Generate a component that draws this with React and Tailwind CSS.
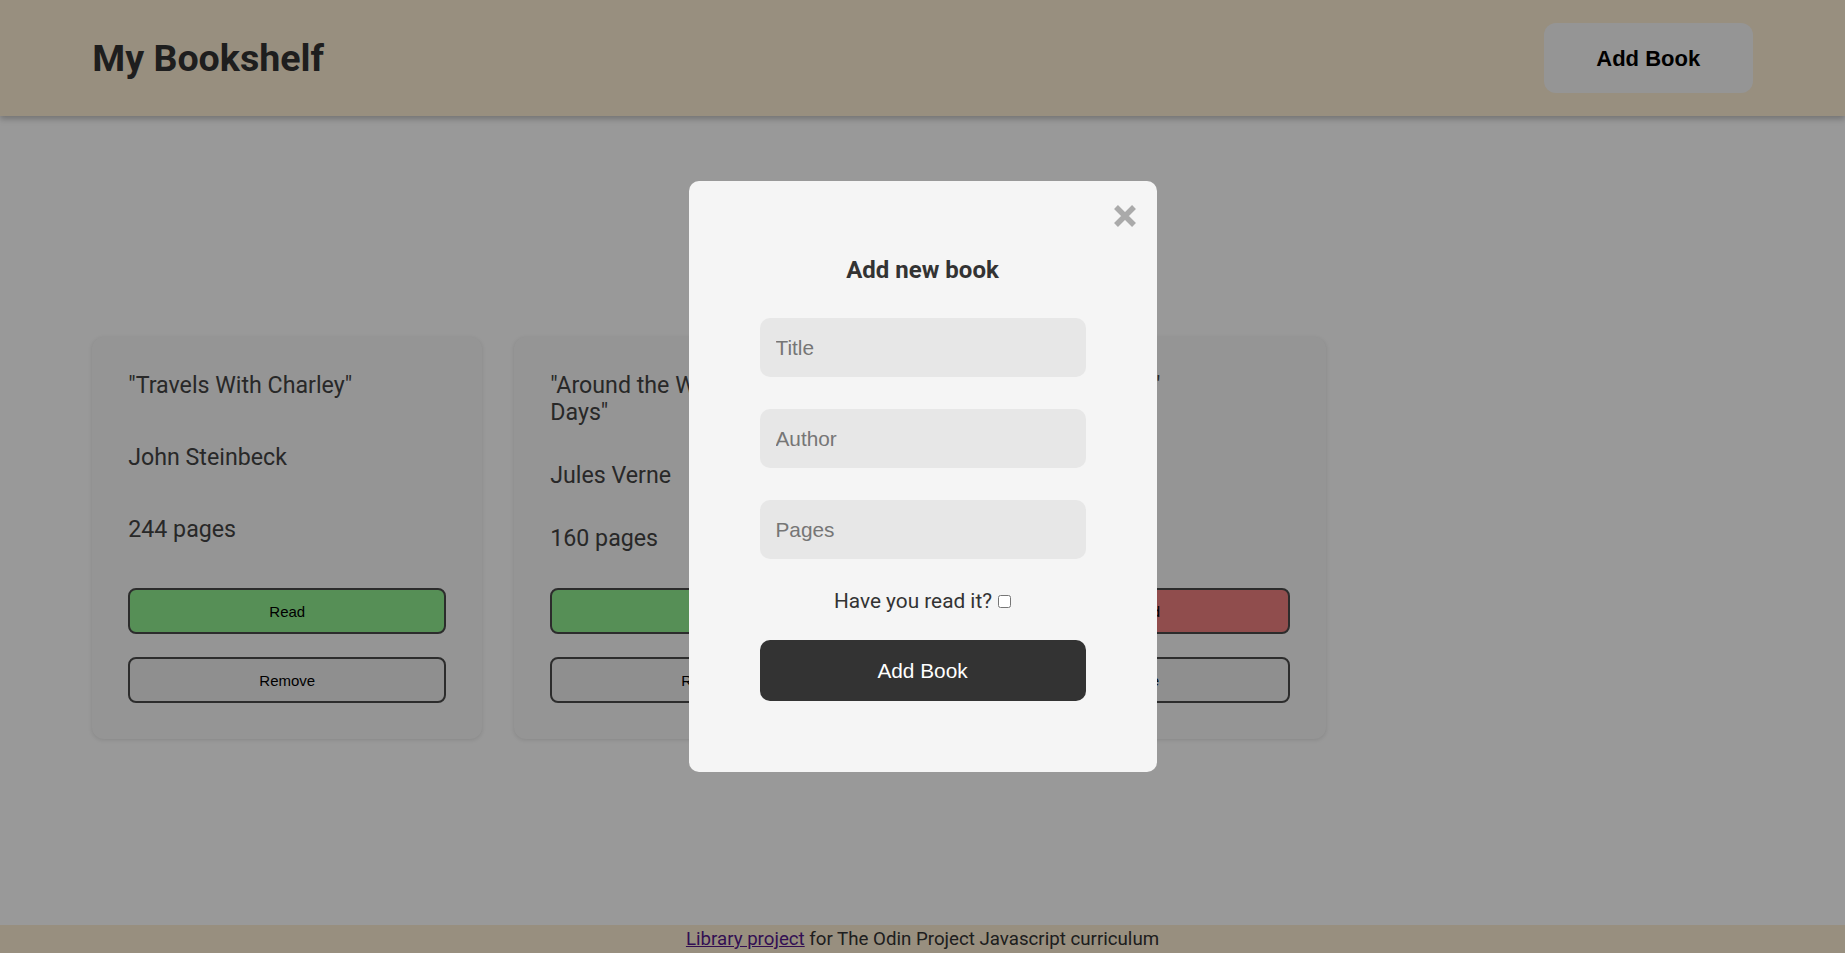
import { useState } from "react";

const initialBooks = [
  { id: 1, title: "Travels With Charley", author: "John Steinbeck", pages: 244, read: true },
  { id: 2, title: "Around the World in Eighty Days", author: "Jules Verne", pages: 160, read: true },
  { id: 3, title: "The Glass Castle", author: "Jeannette Walls", pages: 288, read: false },
];

function BookCard({ book, onToggle, onRemove }) {
  return (
    <div className="bg-[#f8f8f8] rounded-[12px] shadow-[0_1px_4px_rgba(0,0,0,0.12)] pt-[35px] pb-[36px] px-[36px] flex flex-col justify-between gap-9 text-[#444] text-[23.2px] leading-[27px]">
      <p>"{book.title}"</p>
      <p>{book.author}</p>
      <p>{book.pages} pages</p>
      <div className="flex flex-col gap-[23px] font-['Liberation_Sans',Arial,sans-serif] text-[15px] text-black">
        <button
          onClick={() => onToggle(book.id)}
          className={`h-[46px] w-full rounded-[8px] border-2 border-[#4a4a4a] ${
            book.read ? "bg-[#90ee90]" : "bg-[#f08080]"
          }`}
        >
          {book.read ? "Read" : "Not read"}
        </button>
        <button
          onClick={() => onRemove(book.id)}
          className="h-[46px] w-full rounded-[8px] border-2 border-[#4a4a4a] bg-[#efefef]"
        >
          Remove
        </button>
      </div>
    </div>
  );
}

export default function App() {
  const [books, setBooks] = useState(initialBooks);
  const [open, setOpen] = useState(true);

  const toggleRead = (id) =>
    setBooks((bs) => bs.map((b) => (b.id === id ? { ...b, read: !b.read } : b)));
  const removeBook = (id) => setBooks((bs) => bs.filter((b) => b.id !== id));

  return (
    <div className="min-h-screen flex flex-col bg-white font-['Roboto','Noto_Sans',sans-serif]">
      {/* HEADER */}
      <header className="relative z-10 h-[116px] shrink-0 px-[5%] flex items-center justify-between bg-[#fdeed4] shadow-[0_3px_6px_rgba(0,0,0,0.25)]">
        <h1 className="text-[37.6px] leading-[45px] font-bold text-[#333]">My Bookshelf</h1>
        <button
          onClick={() => setOpen(true)}
          className="w-[209px] h-[70px] rounded-[12px] bg-[#f8f8f8] font-['Liberation_Sans',Arial,sans-serif] font-bold text-[22px] text-black"
        >
          Add Book
        </button>
      </header>

      {/* BOOK LIST */}
      <main className="flex-1 px-[5%] pt-[221px]">
        <div className="grid grid-cols-[repeat(auto-fill,390px)] gap-8 items-stretch">
          {books.map((b) => (
            <BookCard key={b.id} book={b} onToggle={toggleRead} onRemove={removeBook} />
          ))}
        </div>
      </main>

      {/* FOOTER */}
      <footer className="h-[28px] shrink-0 bg-[#fdeed4] flex items-center justify-center text-[18.7px] leading-[22px] text-[#333]">
        <p>
          <a href="#" className="underline text-[#551a8b]">Library project</a> for The Odin Project Javascript curriculum
        </p>
      </footer>

      {/* MODAL */}
      {open && (
        <div className="fixed inset-0 z-20 bg-black/40 flex items-center justify-center">
          <div className="relative w-[468px] bg-[#f5f5f5] rounded-[10px] pt-[75px] pb-[71px] flex flex-col items-center">
            <button
              onClick={() => setOpen(false)}
              className="absolute top-[23px] right-[20px] w-6 h-6"
              aria-label="Close"
            >
              <svg viewBox="0 0 24 24" width="24" height="24">
                <path d="M3 3 L21 21 M21 3 L3 21" stroke="#aaaaaa" strokeWidth="5.5" strokeLinecap="butt" />
              </svg>
            </button>
            <h2 className="text-[24px] leading-[28px] font-bold text-[#333]">Add new book</h2>
            <form
              onSubmit={(e) => e.preventDefault()}
              className="mt-[34px] w-[326px] flex flex-col"
            >
              <div className="flex flex-col gap-[32px] font-['Liberation_Sans',Arial,sans-serif] text-[20.8px]">
                <input
                  type="text"
                  placeholder="Title"
                  className="h-[59px] rounded-[10px] bg-[#e7e7e7] px-4 outline-none placeholder:text-[#767676]"
                />
                <input
                  type="text"
                  placeholder="Author"
                  className="h-[59px] rounded-[10px] bg-[#e7e7e7] px-4 outline-none placeholder:text-[#767676]"
                />
                <input
                  type="number"
                  placeholder="Pages"
                  className="h-[59px] rounded-[10px] bg-[#e7e7e7] px-4 outline-none placeholder:text-[#767676]"
                />
              </div>
              <label className="mt-[30px] text-center text-[20.8px] leading-[24px] text-[#333]">
                Have you read it?
                <input type="checkbox" className="ml-[6px]" />
              </label>
              <button
                type="submit"
                className="mt-[27px] h-[61px] rounded-[10px] bg-[#333] text-white font-['Liberation_Sans',Arial,sans-serif] text-[20.8px]"
              >
                Add Book
              </button>
            </form>
          </div>
        </div>
      )}
    </div>
  );
}
